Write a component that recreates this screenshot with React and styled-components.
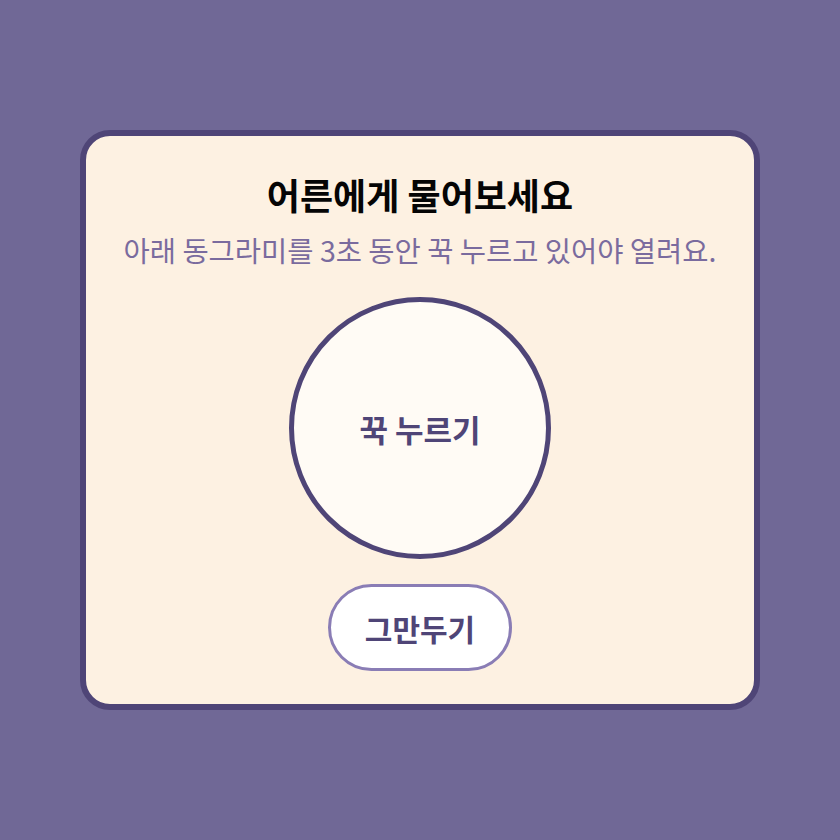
import React from 'react';
import styled, { createGlobalStyle } from 'styled-components';

const GlobalStyle = createGlobalStyle`
  html, body {
    margin: 0;
    padding: 0;
    background: #706896;
  }
  body {
    font-family: "Noto Sans CJK KR", "Noto Sans", sans-serif;
  }
`;

const Screen = styled.div`
  width: 840px;
  height: 840px;
  display: flex;
  align-items: center;
  justify-content: center;
`;

const Card = styled.div`
  box-sizing: border-box;
  width: 680px;
  height: 580px;
  background: #fdf1e2;
  border: 6px solid #4f4577;
  border-radius: 30px;
  display: flex;
  flex-direction: column;
  align-items: center;
  padding-top: 35px;
`;

const Title = styled.h2`
  margin: 0;
  font-size: 36px;
  font-weight: 700;
  color: #050505;
  line-height: 46px;
`;

const Hint = styled.p`
  margin: 13px 0 0;
  font-size: 28.5px;
  color: #7a6b9e;
  line-height: 40px;
  white-space: nowrap;
`;

const HoldCircle = styled.button`
  box-sizing: border-box;
  margin-top: 27px;
  width: 262px;
  height: 262px;
  border-radius: 50%;
  border: 5px solid #4f4577;
  background: #fffbf5;
  color: #4f4577;
  font-family: inherit;
  font-size: 31px;
  font-weight: 700;
  cursor: pointer;
`;

const CancelButton = styled.button`
  box-sizing: border-box;
  margin-top: 25px;
  width: 184px;
  height: 87px;
  border-radius: 44px;
  border: 3px solid #8a7db5;
  background: #fff;
  color: #4f4577;
  font-family: inherit;
  font-size: 30px;
  font-weight: 700;
  cursor: pointer;
`;

export default function App() {
  return (
    <Screen>
      <GlobalStyle />
      <Card>
        <Title>어른에게 물어보세요</Title>
        <Hint>아래 동그라미를 3초 동안 꾹 누르고 있어야 열려요.</Hint>
        <HoldCircle>꾹 누르기</HoldCircle>
        <CancelButton>그만두기</CancelButton>
      </Card>
    </Screen>
  );
}
